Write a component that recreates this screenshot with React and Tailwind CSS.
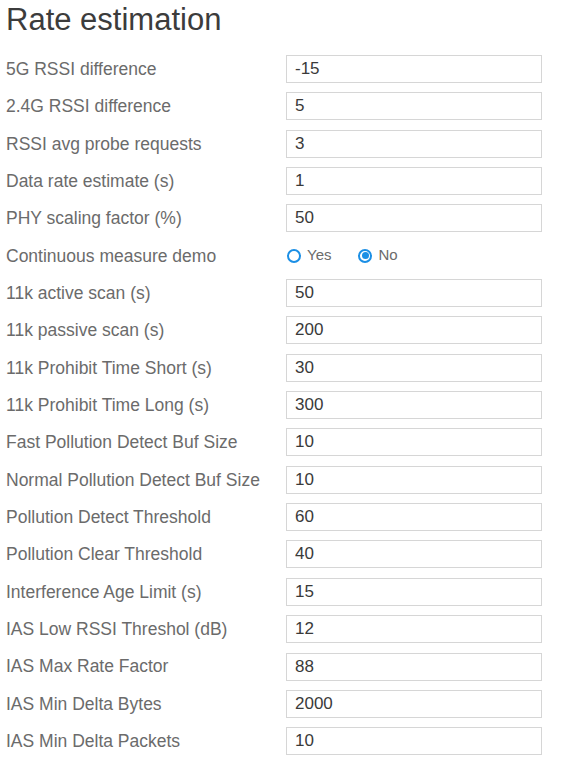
import { useState } from 'react'

const fields = [
  ['5G RSSI difference', '-15'],
  ['2.4G RSSI difference', '5'],
  ['RSSI avg probe requests', '3'],
  ['Data rate estimate (s)', '1'],
  ['PHY scaling factor (%)', '50'],
  ['Continuous measure demo', null],
  ['11k active scan (s)', '50'],
  ['11k passive scan (s)', '200'],
  ['11k Prohibit Time Short (s)', '30'],
  ['11k Prohibit Time Long (s)', '300'],
  ['Fast Pollution Detect Buf Size', '10'],
  ['Normal Pollution Detect Buf Size', '10'],
  ['Pollution Detect Threshold', '60'],
  ['Pollution Clear Threshold', '40'],
  ['Interference Age Limit (s)', '15'],
  ['IAS Low RSSI Threshol (dB)', '12'],
  ['IAS Max Rate Factor', '88'],
  ['IAS Min Delta Bytes', '2000'],
  ['IAS Min Delta Packets', '10'],
]

const Radio = ({ checked, label, onClick }) => (
  <label className="flex items-center gap-[6px] cursor-pointer" onClick={onClick}>
    <span className="w-[14px] h-[14px] rounded-full border-2 border-[#1b8fe5] flex items-center justify-center">
      {checked && <span className="w-[7px] h-[7px] rounded-full bg-[#1b8fe5]" />}
    </span>
    <span>{label}</span>
  </label>
)

const App = () => {
  const [values, setValues] = useState(() => fields.map((f) => f[1]))
  const [demo, setDemo] = useState(false)

  return (
    <div className="min-h-screen bg-white font-[family-name:'Liberation_Sans',Arial,sans-serif] pl-[6px]">
      <h1 className="text-[31px] leading-[36px] text-[#3c3c3c] pt-[2px]">Rate estimation</h1>

      <div className="mt-[17px] grid grid-cols-[280px_256px] gap-y-[9.35px] text-[17.5px] text-[#6b6b6b]">
        {fields.map(([label], i) => (
          <div key={label} className="contents">
            <div className="h-[28px] flex items-center whitespace-nowrap">{label}</div>
            {values[i] === null ? (
              <div className="h-[28px] flex items-center gap-[27px] pl-[1px] text-[15px]">
                <Radio checked={demo} label="Yes" onClick={() => setDemo(true)} />
                <Radio checked={!demo} label="No" onClick={() => setDemo(false)} />
              </div>
            ) : (
              <input
                type="text"
                value={values[i]}
                onChange={(e) => {
                  const next = [...values]
                  next[i] = e.target.value
                  setValues(next)
                }}
                className="h-[28px] w-[256px] border border-[#d6d6d6] px-[8px] text-[17px] text-[#3a3a3a] outline-none font-[family-name:'Liberation_Sans',Arial,sans-serif]"
              />
            )}
          </div>
        ))}
      </div>
    </div>
  )
}

export default App
